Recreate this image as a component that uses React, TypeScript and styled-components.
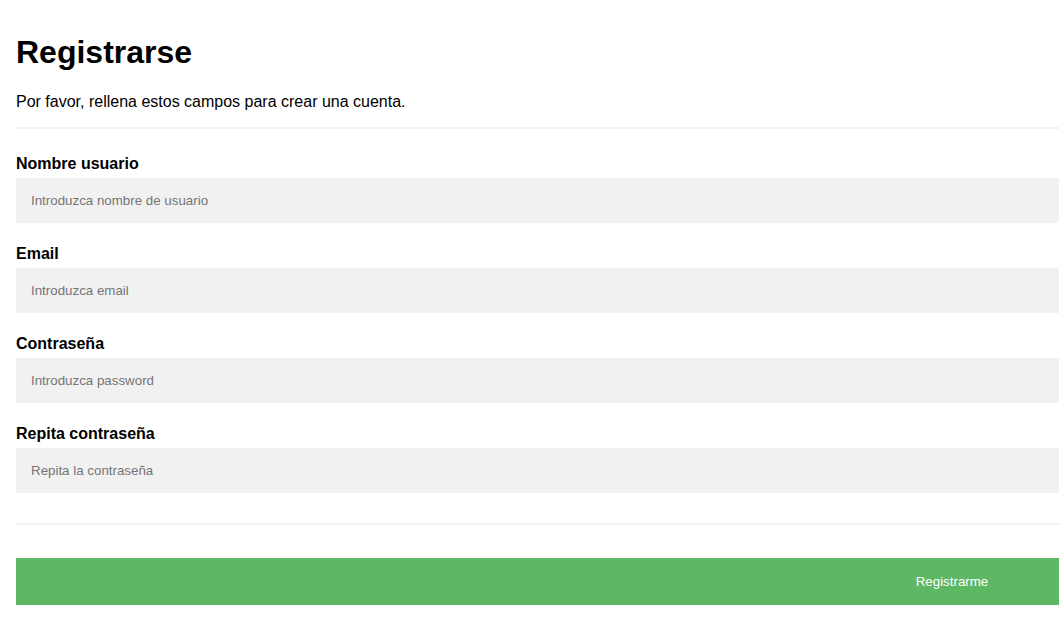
import React from 'react';
import styled, { createGlobalStyle } from 'styled-components';

const GlobalStyle = createGlobalStyle`
	* {
		box-sizing: border-box;
	}
	html, body {
		margin: 0;
		overflow: hidden;
		background: #fff;
	}
	body {
		font-family: 'Liberation Sans', Arial, Helvetica, sans-serif;
		color: #000;
	}
`;

const fields = [
	{ id: 'usuario', label: 'Nombre usuario', type: 'text', placeholder: 'Introduzca nombre de usuario' },
	{ id: 'email', label: 'Email', type: 'text', placeholder: 'Introduzca email' },
	{ id: 'psw', label: 'Contraseña', type: 'password', placeholder: 'Introduzca password' },
	{ id: 'psw-repeat', label: 'Repita contraseña', type: 'password', placeholder: 'Repita la contraseña' },
];

const App = () => {
	return (
		<>
			<GlobalStyle />
			<Form onSubmit={(e) => e.preventDefault()}>
				<Title>Registrarse</Title>
				<Intro>Por favor, rellena estos campos para crear una cuenta.</Intro>
				<Rule />
				{fields.map((f) => (
					<Field key={f.id}>
						<Label htmlFor={f.id}>{f.label}</Label>
						<Input id={f.id} name={f.id} type={f.type} placeholder={f.placeholder} />
					</Field>
				))}
				<Rule $bottom />
				<SubmitButton type='submit'>Registrarme</SubmitButton>
			</Form>
		</>
	);
};

const Form = styled.form`
	width: 1904px;
	padding: 13px 16px 16px;
	display: flex;
	flex-direction: column;
`;

const Title = styled.h1`
	font-size: 32px;
	font-weight: bold;
	margin: 21.44px 0;
`;

const Intro = styled.p`
	font-size: 16px;
	margin: 0 0 16px;
`;

const Rule = styled.hr<{ $bottom?: boolean }>`
	width: 100%;
	height: 0;
	border: 1px solid #f1f1f1;
	margin: ${(p) => (p.$bottom ? '8px 0 25px' : '0 0 26px')};
`;

const Field = styled.div`
	display: flex;
	flex-direction: column;
`;

const Label = styled.label`
	font-size: 16px;
	font-weight: bold;
	line-height: 18px;
`;

const Input = styled.input`
	width: 100%;
	margin: 5px 0 22px;
	padding: 15px;
	border: none;
	background: #f1f1f1;
	font-family: 'Liberation Sans', Arial, sans-serif;
	font-size: 13.333px;
	line-height: 15px;
	&::placeholder {
		color: #757575;
	}
	&:focus {
		outline: none;
		background: #ddd;
	}
`;

const SubmitButton = styled.button`
	width: 100%;
	margin: 8px 0;
	padding: 16px 20px;
	border: none;
	background: #5eb762;
	color: #fff;
	font-family: 'Liberation Sans', Arial, sans-serif;
	font-size: 13.333px;
	line-height: 15px;
	cursor: pointer;
	&:hover {
		background: #4caf50;
	}
`;

export default App;
